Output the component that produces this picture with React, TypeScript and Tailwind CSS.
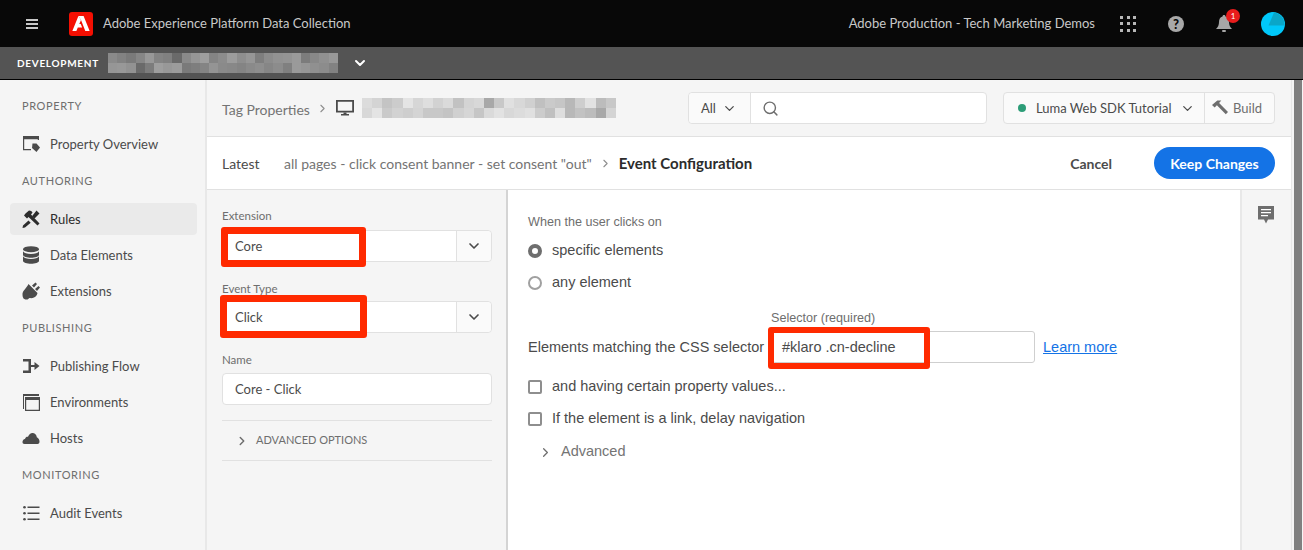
import { ChevronDown, ChevronRight, Search } from 'lucide-react';

const blurDark = ['#8a8a8a', '#9c9c9c', '#828282', '#8e8e8e', '#7a7a7a', '#969696', '#868686', '#7e7e7e', '#989898', '#8c8c8c', '#848484', '#929292', '#808080', '#949494', '#6a6a6a', '#9a9a9a', '#8a8a8a', '#7c7c7c', '#969696', '#888888', '#9e9e9e', '#909090', '#848484', '#989898', '#8c8c8c'];
const blurLight = ['#dcdcdc', '#c8c8c8', '#d4d4d4', '#e0e0e0', '#c4c4c4', '#d8d8d8', '#cccccc', '#d0d0d0', '#e4e4e4', '#c0c0c0', '#d6d6d6', '#cacaca', '#dedede', '#c6c6c6', '#d2d2d2', '#b8b8b8', '#dadada', '#cecece', '#c2c2c2', '#e2e2e2', '#d4d4d4', '#bcbcbc', '#d8d8d8', '#c8c8c8', '#a8a8a8'];

function PixelBlur({ colors, cell }: { colors: string[]; cell: number }) {
  return (
    <div className="flex flex-col">
      {[0, 1].map((r) => (
        <div key={r} className="flex">
          {colors.map((_, i) => (
            <div
              key={i}
              style={{ backgroundColor: colors[(i * (r + 2) + r * 5) % colors.length], width: cell, height: 10 }}
            />
          ))}
        </div>
      ))}
    </div>
  );
}

function AdobeLogo() {
  return (
    <div className="w-[24px] h-[24px] rounded-[3px] bg-[#f40f02] flex items-center justify-center">
      <svg viewBox="0 0 30 26" className="w-[18px] h-[15px]" fill="#fff">
        <path d="M10.500 0H19.500L30 26H22.500L15 7Z" />
        <path d="M10.500 0L0 26H7L9.500 20H17L14.500 14H12L15 7Z" />
      </svg>
    </div>
  );
}

function MenuIcon() {
  return (
    <svg viewBox="0 0 12 10" className="w-[12px] h-[10px]" fill="#c8c8c8">
      <rect y="0" width="12" height="2" />
      <rect y="4" width="12" height="2" />
      <rect y="8" width="12" height="2" />
    </svg>
  );
}

function BellIcon() {
  return (
    <svg viewBox="0 0 16 18" className="w-[16px] h-[18px]" fill="#a6a6a6">
      <path d="M8 0c1 0 1.500.7 1.500 1.500C12 2.300 13 4.500 13 7c0 3 1 5 3 7H0c2-2 3-4 3-7 0-2.500 1-4.700 3.500-5.500C6.500.7 7 0 8 0Z" />
      <rect x="6" y="15" width="4" height="2" rx="1" />
    </svg>
  );
}

function AvatarIcon() {
  return (
    <svg viewBox="0 0 24 24" className="w-[24px] h-[24px]">
      <circle cx="12" cy="12" r="12" fill="#00c8fa" />
      <path d="M7.500 13.500 13 0.500A12 12 0 0 1 23.500 13.500Z" fill="#0aa6c8" />
    </svg>
  );
}

function MonitorIcon() {
  return (
    <svg viewBox="0 0 18 18" className="w-[18px] h-[18px]" fill="#4b4b4b">
      <path d="M0 1h18v12.500H0Zm1.800 1.800v8.900h14.400V2.800Z" />
      <path d="M7.500 13.500h3V15h2.500v1.500H5V15h2.500Z" />
    </svg>
  );
}

function PropertyIcon() {
  return (
    <svg viewBox="0 0 18 18" className="w-[18px] h-[18px]" fill="#4b4b4b">
      <path d="M1 1h16v4h-1.200V4.300H2.200V14H9v1.200H1Z" />
      <path d="M10.500 8.500h4L18 12.500 14.500 17 10 13Z" />
    </svg>
  );
}

function RulesIcon() {
  return (
    <svg viewBox="0 0 18 18" className="w-[18px] h-[18px]" fill="#2c2c2c">
      <path d="M3.500 3.500 7 .5c1.500 0 3 .8 3.500 2L9 4.500l8.500 9-2 2L6.500 7 5 8.500 2 5.500Z" />
      <path d="M14.500.5 17.500 3.500 12.500 8.500 10 6.300ZM6.500 10.500 8.700 12.800 3 17.500.5 18l.5-2.500Z" />
    </svg>
  );
}

function DataIcon() {
  return (
    <svg viewBox="0 0 18 18" className="w-[18px] h-[18px]" fill="#4b4b4b">
      <ellipse cx="9" cy="3.200" rx="8" ry="3" />
      <path d="M1 5.200c1 1.800 4 2.800 8 2.800s7-1 8-2.800v3.600c0 2-4 3-8 3s-8-1-8-3ZM1 10.200c1 1.800 4 2.800 8 2.800s7-1 8-2.800v4.600c0 2-4 3-8 3s-8-1-8-3Z" />
    </svg>
  );
}

function PlugIcon() {
  return (
    <svg viewBox="0 0 18 18" className="w-[18px] h-[18px]" fill="#4b4b4b">
      <path d="M6.500 2 15.500 11c-.5 2-1.500 3.500-3.500 4.500-1.500.7-3 .8-4.500.5L5.500 17.500C4 17.500 2.500 17.500 1.500 16.500.5 15 .5 13.500.500 11.500 1 8.500 4.500 6 6.500 2Z" />
      <path d="M10 3.500 13.500.5 15 2l-3 3.500ZM13 7 16.500 4 18 5.500 15 9Z" />
    </svg>
  );
}

function FlowIcon() {
  return (
    <svg viewBox="0 0 18 18" className="w-[18px] h-[18px]" fill="#4b4b4b">
      <path d="M1 2h8v6h3.500V5L17.500 9 12.500 13v-3H9v6H1v-2.500h5.500V4.500H1Z" />
    </svg>
  );
}

function EnvIcon() {
  return (
    <svg viewBox="0 0 18 18" className="w-[18px] h-[18px]" fill="#4b4b4b">
      <path d="M1 1h16v2H2v13H1Z" />
      <path d="M3 4h15v14H3Zm1.200 3v9.800h12.600V7Z" />
    </svg>
  );
}

function CloudIcon() {
  return (
    <svg viewBox="0 0 18 18" className="w-[18px] h-[18px]" fill="#4b4b4b">
      <path d="M2.500 15C1 15 .5 14 .5 13c0-1.500 1-2.800 2.500-3C3.500 8 5 7.500 6 7.800 7 5 9 3.700 11 4c2.200.3 3.700 2 3.800 4.300 1.700.5 2.700 2.500 2.700 4.200 0 1.500-.5 2.500-2 2.500Z" />
    </svg>
  );
}

function ListIcon() {
  return (
    <svg viewBox="0 0 18 18" className="w-[18px] h-[18px]" fill="#4b4b4b">
      <path d="M5.500 2.500h12v1.500h-12ZM5.500 8.500h12V10h-12ZM5.500 14.500h12V16h-12Z" />
      <circle cx="2.500" cy="3.200" r="1.300" />
      <circle cx="2.500" cy="9.200" r="1.300" />
      <circle cx="2.500" cy="15.200" r="1.300" />
    </svg>
  );
}

function HammerIcon() {
  return (
    <svg viewBox="0 0 18 18" className="w-[16px] h-[16px]" fill="#6e6e6e">
      <path d="M0 5.500 6 .5h4.500L8 3.500l10 10-2.500 2.500L5.500 6 3 8.500Z" />
    </svg>
  );
}

function CommentIcon() {
  return (
    <svg viewBox="0 0 16 18" className="w-[16px] h-[18px]">
      <path d="M0 0h16v13.500h-6L8 17.500 6 13.500H0Z" fill="#6e6e6e" />
      <path d="M3 3h10v1.300H3ZM3 6h10v1.300H3ZM3 9h7v1.300H3Z" fill="#fff" />
    </svg>
  );
}

function NavItem({ icon, label, active }: { icon: React.ReactNode; label: string; active?: boolean }) {
  return (
    <div className={`h-[32px] rounded-[4px] flex items-center gap-[10px] pl-[12px] ${active ? 'bg-[#eaeaea] text-[#2c2c2c]' : 'text-[#4b4b4b]'}`}>
      {icon}
      <span className="pt-[2px]">{label}</span>
    </div>
  );
}

function SectionLabel({ children }: { children: React.ReactNode }) {
  return <div className="text-[11px] tracking-[0.6px] text-[#6e6e6e] pl-[12px] leading-[14px]">{children}</div>;
}

function NavGroup({ children }: { children: React.ReactNode }) {
  return <div className="mt-[15px] mb-[14px] flex flex-col gap-[4px]">{children}</div>;
}

function FieldLabel({ children, className }: { children: React.ReactNode; className?: string }) {
  return <div className={`text-[11.500px] text-[#6e6e6e] leading-[14px] ${className}`}>{children}</div>;
}

function Combo({ value, ringClass }: { value: string; ringClass: string }) {
  return (
    <div className="relative h-[32px] flex bg-white border border-[#e1e1e1] rounded-[4px]">
      <div className="flex-1 flex items-center pl-[12px] pt-[2px] text-[#4b4b4b]">{value}</div>
      <div className="w-[35px] bg-[#fafafa] border-l border-[#e1e1e1] rounded-r-[4px] flex items-center justify-center">
        <ChevronDown className="w-[16px] h-[16px] text-[#4b4b4b]" strokeWidth={2.5} />
      </div>
      <div className={`absolute border-[7px] border-[#ff2a00] rounded-[3px] ${ringClass}`} />
    </div>
  );
}

export default function App() {
  return (
    <div className="w-[1303px] h-[550px] overflow-hidden flex flex-col bg-white text-[13px] font-['Lato',sans-serif]">
      {/* Top bar */}
      <header className="h-[47px] shrink-0 bg-[#080808] flex items-center text-[#c8c8c8]">
        <div className="ml-[26px]">
          <MenuIcon />
        </div>
        <div className="ml-[31px]">
          <AdobeLogo />
        </div>
        <span className="ml-[10px]">Adobe Experience Platform Data Collection</span>
        <span className="ml-auto">Adobe Production - Tech Marketing Demos</span>
        <div className="ml-[25px] grid grid-cols-3 gap-[3.500px] w-[16px]">
          {Array.from({ length: 9 }, (_, i) => (
            <div key={i} className="h-[3px] bg-[#b8b8b8]" />
          ))}
        </div>
        <div className="ml-[32px] w-[16px] h-[16px] rounded-full bg-[#a8a8a8] text-[#080808] font-black text-[13px] leading-[16px] text-center">?</div>
        <div className="relative ml-[32px] h-[18px]">
          <BellIcon />
          <div className="absolute -top-[6px] -right-[8px] w-[14px] h-[14px] rounded-full bg-[#e81c1c] text-white text-[8px] leading-[14px] text-center">1</div>
        </div>
        <div className="ml-[29px] mr-[18px] h-[24px]">
          <AvatarIcon />
        </div>
      </header>

      {/* Environment bar */}
      <div className="h-[33px] shrink-0 bg-[#545454] border-b border-black flex items-center">
        <span className="ml-[17px] w-[91px] text-[10px] font-bold tracking-[0.7px] text-white">DEVELOPMENT</span>
        <div className="w-[230px] h-[20px] overflow-hidden">
          <PixelBlur colors={blurDark} cell={9.2} />
        </div>
        <ChevronDown className="ml-[14px] w-[16px] h-[16px] text-white" strokeWidth={3} />
      </div>

      <div className="flex-1 flex min-h-0">
        {/* Sidebar */}
        <aside className="w-[207px] shrink-0 bg-[#f5f5f5] border-r-2 border-[#e8e8e8] pl-[10px] pr-[8px] pt-[19px]">
          <SectionLabel>PROPERTY</SectionLabel>
          <NavGroup>
            <NavItem icon={<PropertyIcon />} label="Property Overview" />
          </NavGroup>
          <SectionLabel>AUTHORING</SectionLabel>
          <NavGroup>
            <NavItem icon={<RulesIcon />} label="Rules" active />
            <NavItem icon={<DataIcon />} label="Data Elements" />
            <NavItem icon={<PlugIcon />} label="Extensions" />
          </NavGroup>
          <SectionLabel>PUBLISHING</SectionLabel>
          <NavGroup>
            <NavItem icon={<FlowIcon />} label="Publishing Flow" />
            <NavItem icon={<EnvIcon />} label="Environments" />
            <NavItem icon={<CloudIcon />} label="Hosts" />
          </NavGroup>
          <SectionLabel>MONITORING</SectionLabel>
          <NavGroup>
            <NavItem icon={<ListIcon />} label="Audit Events" />
          </NavGroup>
        </aside>

        {/* Main */}
        <main className="flex-1 min-w-0 flex flex-col">
          <div className="h-[57px] shrink-0 bg-[#f5f5f5] border-b border-[#e1e1e1] flex items-center pl-[15px] pr-[16px] whitespace-nowrap">
            <span className="text-[14px] pt-[2px] text-[#747474] w-[88px]">Tag Properties</span>
            <ChevronRight className="ml-[6px] w-[13px] h-[13px] text-[#8e8e8e]" />
            <div className="ml-[7px]">
              <MonitorIcon />
            </div>
            <div className="ml-[8px] w-[254px] h-[20px] overflow-hidden">
              <PixelBlur colors={blurLight} cell={10.2} />
            </div>
            <div className="ml-[72px] h-[32px] flex bg-white border border-[#e1e1e1] rounded-[4px] text-[#4b4b4b]">
              <div className="w-[62px] bg-[#fafafa] border-r border-[#e1e1e1] rounded-l-[4px] flex items-center pl-[12px] gap-[6px]">
                <span className="pt-[2px]">All</span>
                <ChevronDown className="w-[15px] h-[15px]" />
              </div>
              <div className="w-[235px] flex items-center pl-[11px]">
                <Search className="w-[17px] h-[17px] text-[#6e6e6e]" />
              </div>
            </div>
            <div className="ml-auto w-[272px] h-[32px] flex bg-[#fafafa] border border-[#e1e1e1] rounded-[4px] text-[#4b4b4b]">
              <div className="w-[201px] border-r border-[#e1e1e1] flex items-center pl-[14px]">
                <span className="w-[8px] h-[8px] rounded-full bg-[#2d9d78]" />
                <span className="ml-[10px] pt-[2px]">Luma Web SDK Tutorial</span>
                <ChevronDown className="ml-auto mr-[9px] w-[15px] h-[15px]" />
              </div>
              <div className="flex-1 flex items-center pl-[7px] gap-[5px] text-[#6e6e6e]">
                <HammerIcon />
                <span className="pt-[2px]">Build</span>
              </div>
            </div>
          </div>

          <div className="h-[53px] shrink-0 bg-white border-b border-[#e1e1e1] flex items-center pl-[15px] pr-[16px] whitespace-nowrap text-[14px]">
            <span className="text-[#4b4b4b] w-[62px]">Latest</span>
            <span className="text-[#747474]">all pages - click consent banner - set consent "out"</span>
            <ChevronRight className="ml-[7px] w-[13px] h-[13px] text-[#8e8e8e]" />
            <span className="ml-[7px] font-bold text-[15px] text-[#2c2c2c]">Event Configuration</span>
            <span className="ml-auto font-bold text-[#4b4b4b]">Cancel</span>
            <button className="ml-[42px] w-[121px] h-[32px] rounded-full bg-[#1473e6] text-white font-bold">Keep Changes</button>
          </div>

          <div className="flex-1 min-h-0 flex">
            {/* Event form */}
            <div className="w-[301px] shrink-0 bg-[#f5f5f5] border-r-2 border-[#d4d4d4] pl-[15px] pr-[14px] pt-[19px] text-[#4b4b4b]">
              <FieldLabel className="mb-[7px]">Extension</FieldLabel>
              <Combo value="Core" ringClass="left-[-2px] top-[-4px] w-[145px] h-[40px]" />
              <FieldLabel className="mt-[20px] mb-[5px]">Event Type</FieldLabel>
              <Combo value="Click" ringClass="left-[-3px] top-[-7px] w-[147px] h-[43px]" />
              <FieldLabel className="mt-[20px] mb-[6px]">Name</FieldLabel>
              <div className="h-[32px] bg-white border border-[#e1e1e1] rounded-[4px] flex items-center pl-[12px] pt-[2px]">Core - Click</div>
              <div className="mt-[15px] h-[41px] border-y border-[#e1e1e1] flex items-center pl-[13px]">
                <ChevronRight className="w-[14px] h-[14px] text-[#6e6e6e]" strokeWidth={2.5} />
                <span className="ml-[7px] text-[11px] text-[#6e6e6e]">ADVANCED OPTIONS</span>
              </div>
            </div>

            {/* Config form */}
            <div className="flex-1 min-w-0 pl-[20px] pt-[25px] text-[14.500px] text-[#4b4b4b] font-['Liberation_Sans',sans-serif]">
              <div className="text-[12.600px] leading-[14px] text-[#6e6e6e]">When the user clicks on</div>
              <div className="mt-[6px] h-[32px] flex items-center">
                <span className="w-[14px] h-[14px] rounded-full border-[4px] border-[#6e6e6e] bg-white" />
                <span className="ml-[10px]">specific elements</span>
              </div>
              <div className="h-[32px] flex items-center">
                <span className="w-[14px] h-[14px] rounded-full border-2 border-[#a0a0a0] bg-white" />
                <span className="ml-[10px]">any element</span>
              </div>
              <div className="mt-[12px] ml-[243px] text-[12.600px] leading-[14px] text-[#6e6e6e]">Selector (required)</div>
              <div className="mt-[6px] flex items-center">
                <span className="w-[244px] pt-[2px]">Elements matching the CSS selector</span>
                <div className="relative w-[263px] h-[32px] border border-[#cfcfcf] rounded-[3px] flex items-center pl-[9px] pt-[2px]">
                  #klaro .cn-decline
                  <div className="absolute left-[-5px] top-[-5px] w-[162px] h-[42px] border-[6px] border-[#ff2a00] rounded-[3px]" />
                </div>
                <a className="ml-[8px] pt-[2px] text-[#1473e6] underline">Learn more</a>
              </div>
              <div className="mt-[8px] h-[32px] flex items-center">
                <span className="w-[14px] h-[14px] rounded-[2px] border-2 border-[#8e8e8e]" />
                <span className="ml-[10px]">and having certain property values...</span>
              </div>
              <div className="h-[32px] flex items-center">
                <span className="w-[14px] h-[14px] rounded-[2px] border-2 border-[#8e8e8e]" />
                <span className="ml-[10px]">If the element is a link, delay navigation</span>
              </div>
              <div className="h-[34px] flex items-center pl-[10px]">
                <ChevronRight className="w-[15px] h-[15px] text-[#6e6e6e]" />
                <span className="ml-[8px] text-[#747474]">Advanced</span>
              </div>
            </div>

            {/* Comments rail */}
            <div className="w-[51px] shrink-0 bg-[#f5f5f5] border-l-2 border-[#e8e8e8] flex justify-center pt-[16px] pr-[2px]">
              <CommentIcon />
            </div>
          </div>
        </main>

        {/* Scrollbar */}
        <div className="w-[12px] shrink-0 bg-[#f5f5f5] border-l border-[#e8e8e8] pl-[2px] pr-[1px]">
          <div className="h-full bg-[#808080]" />
        </div>
      </div>
    </div>
  );
}
